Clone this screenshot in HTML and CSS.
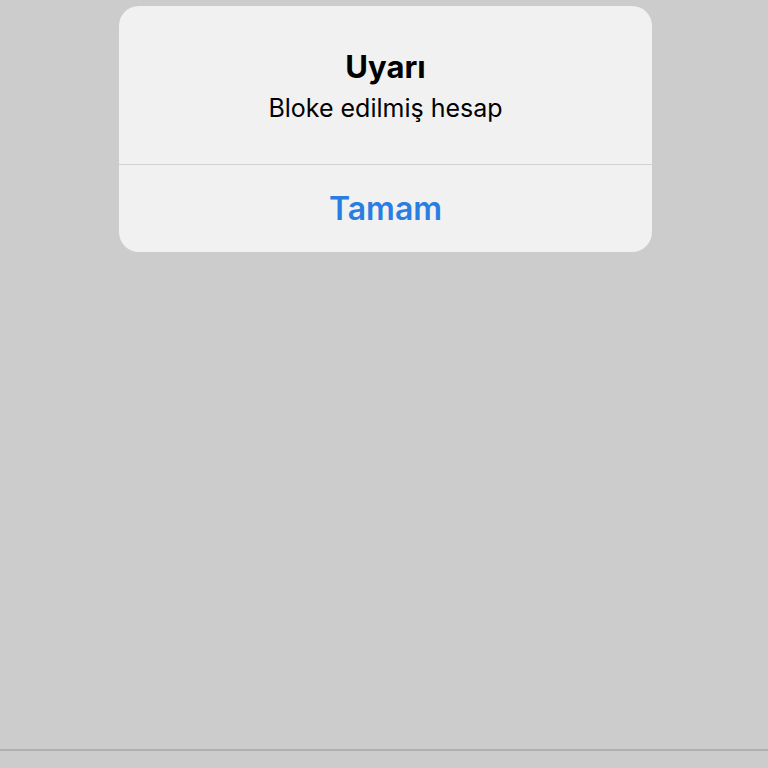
FILE: index.html
```html
<!DOCTYPE html>
<html lang="tr">
<head>
<meta charset="UTF-8">
<meta name="viewport" content="width=device-width, initial-scale=1.0">
<title>Uyarı</title>
<link rel="stylesheet" href="styles.css">
</head>
<body>
<div class="screen">
    <div class="alert">
        <div class="alert-body">
            <div class="alert-title">Uyarı</div>
            <div class="alert-message">Bloke edilmiş hesap</div>
        </div>
        <div class="alert-actions">
            <button class="alert-button">Tamam</button>
        </div>
    </div>
    <div class="home-bar"></div>
</div>
</body>
</html>
```

FILE: styles.css
```css
body {
    margin: 0;
    padding: 0;
    background-color: #cccccc;
    font-family: Inter, "Noto Sans", sans-serif;
}

.screen {
    height: 100vh;
    display: flex;
    flex-direction: column;
}

.alert {
    width: 533px;
    margin: 6px auto 0 119px;
    background-color: #f1f1f1;
    border-radius: 20px;
    overflow: hidden;
}

.alert-body {
    height: 159px;
    box-sizing: border-box;
    padding-top: 41px;
    text-align: center;
    color: #000000;
    border-bottom: 1px solid #d2d2d2;
}

.alert-title {
    font-size: 31px;
    font-weight: 700;
    line-height: 40px;
}

.alert-message {
    font-size: 25px;
    line-height: 30px;
    margin-top: 6px;
}

.alert-actions {
    height: 87px;
    display: flex;
    align-items: center;
    justify-content: center;
}

.alert-button {
    background: none;
    border: none;
    padding: 0;
    font-family: inherit;
    font-size: 32px;
    font-weight: 600;
    color: #2a7de1;
    cursor: pointer;
}

.home-bar {
    margin-top: auto;
    height: 17px;
    border-top: 2px solid #afafaf;
}
```
